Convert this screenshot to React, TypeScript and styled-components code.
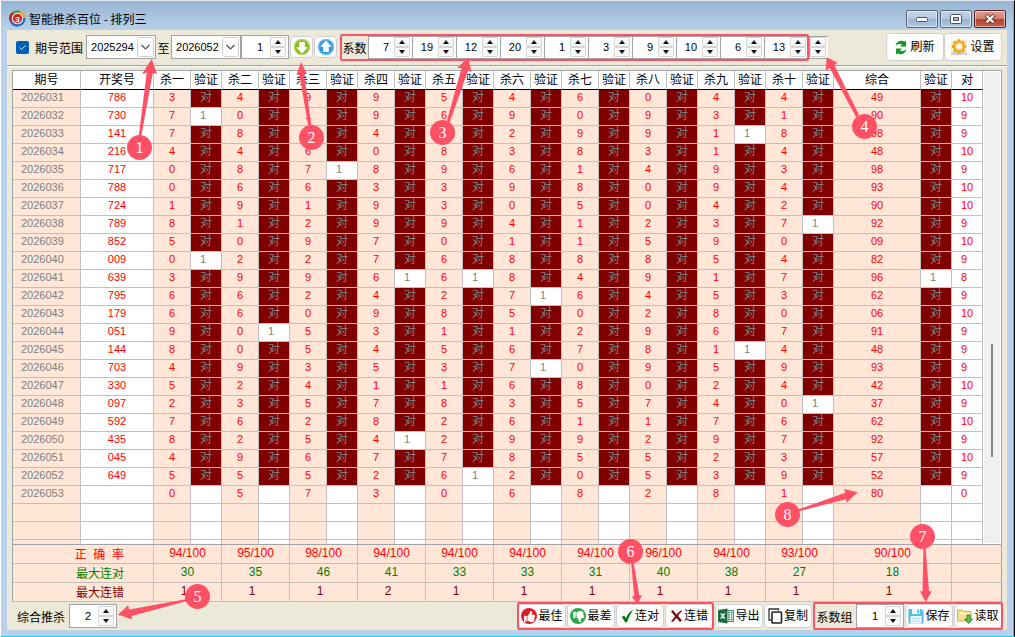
import React from "react";
import styled, { createGlobalStyle, css } from "styled-components";
import { FaThumbsUp, FaThumbsDown } from "react-icons/fa";

const color = {
  face: "#ece9d8",
  frame: "#b9d1ea",
  peach: "#ffe6d7",
  maroon: "#800000",
  line: "#c0c0c0",
  edge: "#a0a4a8",
  red: "#ff0000",
  green: "#008000",
  grey: "#808080",
  mark: "#ff5165",
};

const GlobalStyle = createGlobalStyle`
  * { box-sizing: border-box; }
  body {
    margin: 0;
    background: #fff;
    font-family: "Liberation Sans", "Noto Sans CJK SC", sans-serif;
    font-size: 12px;
    color: #000;
  }
  button, input, select { font: inherit; color: inherit; margin: 0; }
`;

/* ---------- window ---------- */

const Window = styled.div`
  position: relative;
  display: flex;
  flex-direction: column;
  height: 100vh;
  min-width: 1000px;
  padding: 0 7px 6px 6px;
  background: ${color.frame};
  border-top: 1px solid #dfe6ee;
  border-left: 1px solid #fff;
  border-bottom: 1px solid #22cfe6;
  border-right: 1px solid #000;
  box-shadow: inset -1px 0 0 #22cfe6;
  overflow: hidden;
`;

const TitleBar = styled.header`
  display: flex;
  align-items: center;
  height: 29px;
  flex: none;
  margin: 0 -6px;
  padding: 6px 7px 0 8px;
  background: linear-gradient(#98b4d2, #b9d1ea);
`;

const Title = styled.h1`
  margin: 0 auto 0 3px;
  font-size: 12px;
  line-height: 16px;
  font-weight: 400;
  font-family: "Noto Sans CJK SC", sans-serif;
`;

const CaptionButton = styled.button<{ $close?: boolean }>`
  display: flex;
  align-items: center;
  justify-content: center;
  width: 32px;
  height: 18px;
  margin-left: 2px;
  padding: 0;
  border: 1px solid ${(p) => (p.$close ? "#5a1f1f" : "#56677d")};
  border-radius: 2px;
  box-shadow: inset 0 0 0 1px rgba(255, 255, 255, 0.5);
  background: ${(p) =>
    p.$close
      ? "linear-gradient(#e0a094 0%, #d08070 48%, #b8402c 52%, #c8604a 100%)"
      : "linear-gradient(#c3d4e8 0%, #b4c8e0 48%, #98b2d0 52%, #b3c9e2 100%)"};
`;

const Client = styled.main`
  display: flex;
  flex-direction: column;
  flex: 1;
  min-height: 0;
  background: ${color.face};
`;

const Toolbar = styled.div`
  display: flex;
  align-items: center;
  flex: none;
  height: 36px;
  padding: 0 5px 1px 9px;
  border-bottom: 1px solid #a3a193;
  box-shadow: 0 1px 0 #fff;
`;

const BottomBar = styled.div`
  display: flex;
  align-items: center;
  gap: 1px;
  flex: none;
  height: 28px;
  padding: 0 4px 0 10px;
`;

const Spacer = styled.div`
  flex: 1;
`;

/* ---------- controls ---------- */

const CheckLabel = styled.label`
  display: flex;
  align-items: center;
  gap: 6px;
  margin-right: 3px;
  white-space: nowrap;
`;

const Checkbox = styled.input`
  appearance: none;
  width: 13px;
  height: 13px;
  border-radius: 2px;
  background: #005fb8
    url("data:image/svg+xml,%3Csvg xmlns='http://www.w3.org/2000/svg' viewBox='0 0 13 13'%3E%3Cpath d='M3.5 6.5l2 2 4-4' fill='none' stroke='%23cfe3f5'/%3E%3C/svg%3E");
`;

const SelectBox = styled.span`
  position: relative;
  display: flex;
  width: 70px;
  height: 24px;
  svg {
    position: absolute;
    right: 2px;
    top: 2px;
    pointer-events: none;
  }
`;

const Select = styled.select`
  appearance: none;
  width: 100%;
  padding: 0 18px 0 4px;
  border: 1px solid ${color.edge};
  border-radius: 0;
  background: #fff;
  font-size: 11px;
`;

const To = styled.span`
  width: 15px;
  text-align: center;
`;

const SpinBox = styled.span<{ $w: number; $flat?: boolean }>`
  display: flex;
  align-items: center;
  gap: ${(p) => (p.$flat ? 5 : 7)}px;
  width: ${(p) => p.$w}px;
  height: ${(p) => (p.$flat ? 23 : 24)}px;
  padding-right: 2px;
  background: #fff;
  border: 1px solid ${color.edge};
  ${(p) =>
    p.$flat &&
    css`
      border-right: 0;
    `}
`;

const SpinInput = styled.input`
  flex: 1;
  width: 0;
  min-width: 0;
  height: 18px;
  padding: 0;
  border: 0;
  background: none;
  text-align: right;
  font-size: 11px;
  appearance: textfield;
  outline: none;
  &::-webkit-inner-spin-button,
  &::-webkit-outer-spin-button {
    appearance: none;
    margin: 0;
  }
`;

const Arrows = styled.span`
  display: flex;
  flex-direction: column;
  flex: none;
  width: 16px;
`;

const ArrowButton = styled.button`
  display: flex;
  align-items: center;
  justify-content: center;
  height: 10px;
  padding: 0;
  background: #fbfbfb;
  border: 1px solid #d4d4d4;
  border-radius: 1px;
`;

const PushButton = styled.button<{ $big?: boolean }>`
  display: flex;
  align-items: center;
  justify-content: center;
  gap: ${(p) => (p.$big ? 3 : 1)}px;
  flex: none;
  width: ${(p) => (p.$big ? 58 : 48)}px;
  height: ${(p) => (p.$big ? 28 : 24)}px;
  padding: 0;
  border: 1px solid #d0d0ce;
  border-radius: 4px;
  background: #fdfdfd;
  line-height: 16px;
  white-space: nowrap;
`;

const IconButton = styled.button`
  display: flex;
  align-items: center;
  justify-content: center;
  width: 23px;
  height: 22px;
  margin-left: 1px;
  padding: 0;
  border: 1px solid #d0d0ce;
  border-radius: 4px;
  background: #fdfdfd;
`;

const Group = styled.div<{ $tall?: boolean }>`
  position: relative;
  display: flex;
  align-items: center;
  gap: ${(p) => (p.$tall ? 0 : 1)}px;
  height: ${(p) => (p.$tall ? 27 : 28)}px;
  padding: 0 1px;
  margin-left: ${(p) => (p.$tall ? 3 : 0)}px;
  &::after {
    content: "";
    position: absolute;
    inset: 0;
    border: 2px solid ${color.mark};
    border-radius: 2px;
    pointer-events: none;
  }
`;

const GroupLabel = styled.span<{ $w: number }>`
  width: ${(p) => p.$w}px;
  text-align: center;
  white-space: nowrap;
`;

const FieldLabel = styled.label`
  margin-right: 3px;
  white-space: nowrap;
`;

/* ---------- grid ---------- */

const GridArea = styled.section`
  display: flex;
  flex: 1;
  min-height: 0;
  margin: 4px 5px 0;
  border: 1px solid ${color.edge};
  background: #fff;
`;

const GridView = styled.div`
  flex: 1;
  min-width: 0;
  overflow: hidden;
`;

const Table = styled.table`
  width: 100%;
  table-layout: fixed;
  border-collapse: separate;
  border-spacing: 0;
`;

const Th = styled.th`
  height: 19px;
  padding: 0;
  border-right: 1px solid ${color.line};
  border-bottom: 1px solid #000;
  background: #fff;
  font-weight: 400;
  line-height: 18px;
  white-space: nowrap;
`;

type Kind = "period" | "open" | "kill" | "hit" | "miss" | "count";

const Td = styled.td<{ $kind: Kind }>`
  height: 18px;
  padding: 0 0 2px;
  border-right: 1px solid ${color.line};
  border-bottom: 1px solid ${color.line};
  font-size: 11px;
  line-height: 15px;
  text-align: center;
  color: ${color.red};
  background: #fff;
  ${(p) =>
    p.$kind === "period" &&
    css`
      padding-left: 8px;
      text-align: left;
      color: ${color.grey};
      background: ${color.peach};
    `}
  ${(p) =>
    p.$kind === "kill" &&
    css`
      background: ${color.peach};
    `}
  ${(p) =>
    (p.$kind === "hit" || p.$kind === "miss") &&
    css`
      padding-left: 9px;
      text-align: left;
      color: ${color.grey};
    `}
  ${(p) =>
    p.$kind === "hit" &&
    css`
      font-size: 12px;
      background: ${color.maroon};
    `}
  ${(p) =>
    p.$kind === "count" &&
    css`
      padding-left: 9px;
      text-align: left;
    `}
`;

const ScrollTrack = styled.div`
  display: flex;
  justify-content: flex-end;
  flex: none;
  width: 18px;
  padding: 272px 7px 0 0;
  border: 1px solid #fff;
  background: #f0f0f0;
`;

const ScrollThumb = styled.div`
  width: 2px;
  height: 113px;
  background: #858585;
`;

const Summary = styled(Table)`
  flex: none;
  width: auto;
  margin: 0 5px;
  border-left: 1px solid ${color.edge};
  border-right: 1px solid ${color.edge};
  background: ${color.peach};
`;

const SummaryTr = styled.tr<{ $color: string }>`
  color: ${(p) => p.$color};
`;

const SummaryTh = styled.th`
  height: 19px;
  padding: 2px 29px 0 0;
  border-right: 1px solid ${color.line};
  border-bottom: 1px solid ${color.line};
  font-weight: 400;
  line-height: 16px;
  text-align: right;
  white-space: pre;
`;

const SummaryTd = styled.td`
  height: 19px;
  padding: 0 0 2px;
  border-right: 1px solid ${color.line};
  border-bottom: 1px solid ${color.line};
  font-size: 12px;
  line-height: 16px;
  text-align: center;
  white-space: pre;
  &:last-child {
    border-right: 0;
  }
`;

/* ---------- callouts ---------- */

const ArrowLayer = styled.svg`
  position: absolute;
  left: -1px;
  top: -1px;
  pointer-events: none;
`;

const Callout = styled.span<{ $x: number; $y: number }>`
  position: absolute;
  left: ${(p) => p.$x - 14}px;
  top: ${(p) => p.$y - 14}px;
  width: 25px;
  height: 25px;
  border-radius: 50%;
  background: ${color.mark};
  color: #fff;
  font-family: "Liberation Serif", serif;
  font-size: 16px;
  line-height: 25px;
  text-align: center;
  pointer-events: none;
`;

/* ---------- data ---------- */

const digitNames = ["一", "二", "三", "四", "五", "六", "七", "八", "九", "十"];

// period, drawn number, ten kill digits, combined pair, missed columns (11 = combined), correct count
type Draw = [string, string, string, string, number[], string];

const draws: Draw[] = [
  ["2026031", "786", "3499546044", "49", [], "10"],
  ["2026032", "730", "7019690931", "90", [1], "9"],
  ["2026033", "141", "7884829918", "98", [9], "9"],
  ["2026034", "216", "4460838314", "48", [], "10"],
  ["2026035", "717", "0878961493", "98", [3], "9"],
  ["2026036", "788", "0663398094", "93", [], "10"],
  ["2026037", "724", "1919305042", "90", [], "10"],
  ["2026038", "789", "8129941237", "92", [10], "9"],
  ["2026039", "852", "5097011590", "09", [], "10"],
  ["2026040", "009", "0227688854", "82", [1], "9"],
  ["2026041", "639", "3996684917", "96", [4, 5, 11], "8"],
  ["2026042", "795", "6624276453", "62", [6], "9"],
  ["2026043", "179", "6609850280", "06", [], "10"],
  ["2026044", "051", "9053112967", "91", [2], "9"],
  ["2026045", "144", "8054567814", "48", [9], "9"],
  ["2026046", "703", "4935370959", "93", [6], "9"],
  ["2026047", "330", "5241168024", "42", [], "10"],
  ["2026048", "097", "2357835740", "37", [10], "9"],
  ["2026049", "592", "7628261176", "62", [], "10"],
  ["2026050", "435", "8254299297", "92", [4], "9"],
  ["2026051", "045", "4967785523", "57", [], "10"],
  ["2026052", "649", "5552620539", "52", [5], "9"],
  ["2026053", "", "0573068281", "80", [], "0"],
  ["", "", "", "", [], ""],
  ["", "", "", "", [], ""],
  ["", "", "", "", [], ""],
];

const summary = [
  {
    label: "正  确  率",
    tone: color.red,
    values: [94, 95, 98, 94, 94, 94, 94, 96, 94, 93, 90].map((n) => `${n}/100`),
  },
  {
    label: "最大连对",
    tone: color.green,
    values: ["30", "35", "46", "41", "33", "33", "31", "40", "38", "27", "18"],
  },
  {
    label: "最大连错",
    tone: color.maroon,
    values: ["1", "1", "1", "2", "1", "1", "1", "1", "1", "1", "1"].map((n) => n + "  "),
  },
];

const coefficients = [7, 19, 12, 20, 1, 3, 9, 10, 6, 13];

const callouts = [
  { n: 1, x: 140, y: 148, d: "M151.7 59L142 74l4.7-1.3L138.5 138h2.5L152.7 73l4.3 1z" },
  { n: 2, x: 312, y: 138, d: "M301 62l-4.7 13.3 3-1.3L309 130h3L304 73.3l3 .7z" },
  { n: 3, x: 443, y: 133, d: "M468.3 57.3L457 68h4.5L446 124h3L468 70.7l3.3 1.3z" },
  { n: 4, x: 865, y: 127, d: "M826.7 57.3l-1 13.4 4-2.7L856 117l3-2L834.3 65l3.4-2.3z" },
  { n: 5, x: 198, y: 597, d: "M118 614.7l10-9.4 1.5 4.2L187 599v2L131.7 616l.3 3.3z" },
  { n: 6, x: 631, y: 552, d: "M637.7 604l-6-7.3 2.5-.7L631 562h2.5L639.3 595.5l2.7-.2z" },
  { n: 7, x: 923, y: 537, d: "M925.7 602L920 591.3h2.5L923.5 547h2L929 591.3h2.7z" },
  { n: 8, x: 788, y: 515, d: "M857.7 492.3L844 489l1.3 3.7L798 509.5v2L846 499.3l.7 3.4z" },
];

/* ---------- icons ---------- */

const Logo = () => (
  <svg width="17" height="17" viewBox="0 0 17 17">
    <g fill="none" strokeWidth="2.4">
      <path d="M2 11A7 7 0 0 1 4.500 2.700" stroke="#b01c2c" />
      <path d="M4 3.200A7 7 0 0 1 11 1.900" stroke="#3f9a3c" />
      <path d="M11 2A7 7 0 0 1 15.400 8" stroke="#e8a21a" />
      <path d="M15.400 8A7 7 0 0 1 9 15.400" stroke="#2a72c8" />
      <path d="M9 15.400A7 7 0 0 1 2 11" stroke="#3c5fb0" />
    </g>
    <circle cx="8.5" cy="8.5" r="5.5" fill="#fff" />
    <circle cx="8.5" cy="8.5" r="4.7" fill="#d8232b" />
    <text x="8.5" y="11.5" textAnchor="middle" fontSize="8" fontWeight="700" fill="#fff">
      3
    </text>
  </svg>
);

const Chevron = () => (
  <svg width="17" height="20" viewBox="0 0 17 20">
    <rect x=".5" y=".5" width="16" height="19" rx="2" fill="#fdfdfd" stroke="#d0d0d0" />
    <path d="M4.500 8l4 4 4-4" fill="none" stroke="#555" strokeWidth="1.2" />
  </svg>
);

const RoundArrow = ({ up }: { up?: boolean }) => (
  <svg width="18" height="18" viewBox="0 0 18 18">
    <circle cx="9" cy="9" r="8" fill={up ? "#2b9be0" : "#8cbf1f"} />
    <circle cx="9" cy="9" r="7.4" fill="none" stroke={up ? "#7cc8f2" : "#b9da5c"} />
    <path
      d={up ? "M9 2.500l5.800 6.200h-3V14H6.200V8.700h-3z" : "M9 15.500L3.200 9.300h3V4h5.600v5.300h3z"}
      fill="#fff"
    />
  </svg>
);

const RefreshIcon = () => (
  <svg width="12" height="15" viewBox="0 0 12 15">
    <g fill="#0c9a22">
      <path d="M.5 5.500C1.500 2.200 4 .7 6.500.8c1.200 0 2.200.4 3 1L11 .5v6H5l2-2C5.800 3.600 3.500 3.700.5 5.500z" />
      <path d="M11.500 9.500c-1 3.300-3.500 4.800-6 4.700-1.200 0-2.200-.4-3-1L1 14.500v-6h6l-2 2c1.200.9 3.500.8 6.500-1z" />
    </g>
  </svg>
);

const GearIcon = () => (
  <svg width="16" height="16" viewBox="0 0 16 16">
    <rect y="1" width="16" height="15" fill="#f1f1f1" />
    <rect y="13" width="16" height="3" fill="#d2d2d2" />
    <g fill="#f8a413">
      {[0, 45, 90, 135].map((a) => (
        <rect key={a} x="6.3" y=".3" width="3.4" height="14.4" rx=".6" transform={`rotate(${a} 8 7.5)`} />
      ))}
      <circle cx="8" cy="7.5" r="5.6" />
    </g>
    <circle cx="8" cy="7.5" r="4" fill="#ffc94a" />
    <circle cx="8" cy="7.5" r="3.1" fill="#f4f4f4" />
  </svg>
);

const ThumbDisc = styled.span<{ $tone: string }>`
  display: flex;
  align-items: center;
  justify-content: center;
  flex: none;
  width: 16px;
  height: 16px;
  border-radius: 50%;
  background: ${(p) => p.$tone};
  color: #fff;
`;

const CheckIcon = () => (
  <svg width="13" height="14" viewBox="0 0 13 14">
    <path d="M.8 8l2.200-1.500 2 2.700C6.500 5.200 8.500 2.700 12.200.8 9.800 4.500 7.700 8.500 6 13.200H4.200z" fill="#087a14" />
  </svg>
);

const CrossIcon = () => (
  <svg width="13" height="14" viewBox="0 0 13 14">
    <path
      d="M1 2.500L3 1c1.200 1.800 2.300 3.200 3.600 4.500C7.800 4 9.200 2.600 11.500 1.300l.5.700C10.500 3.500 9.200 5 8.200 7c1.200 1.600 2.400 2.900 3.800 4.200L10 13C8.700 11.800 7.500 10.300 6.500 9 5.300 10.500 4.300 11.700 3 13l-2-.8C2.500 10.800 3.800 9.200 5 7.200 3.500 5.500 2.200 4 1 2.500z"
      fill="#7d0d0d"
    />
  </svg>
);

const ExcelIcon = () => (
  <svg width="16" height="16" viewBox="0 0 16 16">
    <rect x="8" y="2.5" width="7.5" height="11" fill="#fff" stroke="#207245" strokeWidth=".8" />
    <path
      d="M10 4.500h1.700M12.700 4.500h1.700M10 6.800h1.700M12.700 6.800h1.700M10 9.200h1.700M12.700 9.200h1.700M10 11.500h1.700M12.700 11.500h1.700"
      stroke="#207245"
      strokeWidth="1.3"
    />
    <path d="M0 2L9.500.5v15L0 14z" fill="#1f6e43" />
    <path d="M2.800 5.300l3.800 5.400M6.600 5.300l-3.800 5.400" stroke="#fff" strokeWidth="1.4" />
  </svg>
);

const CopyIcon = () => (
  <svg width="15" height="16" viewBox="0 0 15 16">
    <path d="M3 12H1V1h9.500v1.500" fill="none" stroke="#333" strokeWidth="1.3" />
    <rect x="4" y="4" width="9.500" height="11" rx=".8" fill="#fff" stroke="#222" strokeWidth="1.6" />
  </svg>
);

const SaveIcon = () => (
  <svg width="16" height="16" viewBox="0 0 16 16">
    <path d="M.5 1h13l2 2v12.500H.5z" fill="#56bdec" />
    <rect x="4" y="1" width="8" height="5" fill="#e9f6fd" />
    <rect x="9" y="1.8" width="2" height="3.2" fill="#56bdec" />
    <rect x="2.5" y="8" width="11" height="7.5" fill="#f2fafe" />
    <path d="M4 10.500h8M4 13h8" stroke="#a9d8f2" />
  </svg>
);

const FolderIcon = () => (
  <svg width="16" height="16" viewBox="0 0 16 16">
    <path d="M.5 2h5l1.500 1.500h7V13H.5z" fill="#f7df8e" stroke="#caa23a" strokeWidth=".8" />
    <path d="M2.500 5.500H13" stroke="#fffbe6" strokeWidth="1.4" />
    <path d="M10 7h3.200v4h2.300l-3.900 4.500L7.700 11H10z" fill="#5cc04f" stroke="#1f7d24" strokeWidth=".8" />
  </svg>
);

/* ---------- composed parts ---------- */

const SpinArrows = ({ name }: { name: string }) => (
  <Arrows>
    <ArrowButton type="button" aria-label={`${name} +`}>
      <svg width="6" height="4" viewBox="0 0 6 4">
        <path d="M0 4l3-4 3 4z" fill="#111" />
      </svg>
    </ArrowButton>
    <ArrowButton type="button" aria-label={`${name} -`}>
      <svg width="6" height="4" viewBox="0 0 6 4">
        <path d="M0 0l3 4 3-4z" fill="#111" />
      </svg>
    </ArrowButton>
  </Arrows>
);

const Spinner = ({
  name,
  value,
  width,
  flat,
  id,
}: {
  name: string;
  value: number;
  width: number;
  flat?: boolean;
  id?: string;
}) => (
  <SpinBox $w={width} $flat={flat}>
    <SpinInput id={id} type="number" aria-label={name} defaultValue={value} />
    <SpinArrows name={name} />
  </SpinBox>
);

const PeriodSelect = ({ name, value }: { name: string; value: string }) => (
  <SelectBox>
    <Select aria-label={name} defaultValue={value}>
      <option>{value}</option>
    </Select>
    <Chevron />
  </SelectBox>
);

const VerifyCell = ({ draw, column }: { draw: Draw; column: number }) => {
  if (!draw[1]) return <Td $kind="miss" />;
  return draw[4].includes(column) ? <Td $kind="miss">1</Td> : <Td $kind="hit">对</Td>;
};

const DrawRow = ({ draw }: { draw: Draw }) => (
  <tr>
    <Td $kind="period">{draw[0]}</Td>
    <Td $kind="open">{draw[1]}</Td>
    {digitNames.map((name, i) => (
      <React.Fragment key={name}>
        <Td $kind="kill">{draw[2][i]}</Td>
        <VerifyCell draw={draw} column={i + 1} />
      </React.Fragment>
    ))}
    <Td $kind="kill">{draw[3]}</Td>
    <VerifyCell draw={draw} column={11} />
    <Td $kind="count">{draw[5]}</Td>
  </tr>
);

const Col = styled.col<{ $w: number }>`
  width: ${(p) => p.$w}px;
`;

export default function App() {
  return (
    <>
      <GlobalStyle />
      <Window>
        <TitleBar>
          <Logo />
          <Title>智能推杀百位 - 排列三</Title>
          <CaptionButton aria-label="最小化">
            <svg width="12" height="7" viewBox="0 0 12 7">
              <rect x=".5" y="2.5" width="11" height="4" rx="1" fill="#fff" stroke="#4a5666" />
            </svg>
          </CaptionButton>
          <CaptionButton aria-label="最大化">
            <svg width="12" height="10" viewBox="0 0 12 10">
              <rect x=".5" y=".5" width="11" height="9" rx="1" fill="#fff" stroke="#4a5666" />
              <rect x="3.500" y="3.500" width="5" height="3" fill="#a9bfdb" stroke="#4a5666" />
            </svg>
          </CaptionButton>
          <CaptionButton $close aria-label="关闭">
            <svg width="12" height="10" viewBox="0 0 12 10">
              <path d="M2 1l8 8M10 1L2 9" stroke="#5b3535" strokeWidth="4" />
              <path d="M2.500 1.500l7 7M9.500 1.500l-7 7" stroke="#fff" strokeWidth="2.4" />
            </svg>
          </CaptionButton>
        </TitleBar>

        <Client>
          <Toolbar>
            <CheckLabel>
              <Checkbox type="checkbox" defaultChecked />
              期号范围
            </CheckLabel>
            <PeriodSelect name="起始期号" value="2025294" />
            <To>至</To>
            <PeriodSelect name="结束期号" value="2026052" />
            <Spinner name="期数" value={1} width={48} />
            <IconButton aria-label="下移">
              <RoundArrow />
            </IconButton>
            <IconButton aria-label="上移">
              <RoundArrow up />
            </IconButton>
            <Group $tall>
              <GroupLabel $w={27}>系数</GroupLabel>
              {coefficients.map((value, i) => (
                <Spinner key={i} name={`系数${i + 1}`} value={value} width={44} flat />
              ))}
            </Group>
            <SpinBox $w={19} $flat>
              <SpinArrows name="全部系数" />
            </SpinBox>
            <Spacer />
            <PushButton $big>
              <RefreshIcon />
              刷新
            </PushButton>
            <PushButton $big>
              <GearIcon />
              设置
            </PushButton>
          </Toolbar>

          <GridArea>
            <GridView>
              <Table>
                <colgroup>
                  <Col $w={68} />
                  <Col $w={73} />
                  {digitNames.map((name) => (
                    <React.Fragment key={name}>
                      <Col $w={37} />
                      <Col $w={31} />
                    </React.Fragment>
                  ))}
                  <Col $w={87} />
                  <Col $w={31} />
                  <Col $w={31} />
                </colgroup>
                <thead>
                  <tr>
                    <Th>期号</Th>
                    <Th>开奖号</Th>
                    {digitNames.map((name) => (
                      <React.Fragment key={name}>
                        <Th>杀{name}</Th>
                        <Th>验证</Th>
                      </React.Fragment>
                    ))}
                    <Th>综合</Th>
                    <Th>验证</Th>
                    <Th>对</Th>
                  </tr>
                </thead>
                <tbody>
                  {draws.map((draw, i) => (
                    <DrawRow key={i} draw={draw} />
                  ))}
                </tbody>
              </Table>
            </GridView>
            <ScrollTrack>
              <ScrollThumb />
            </ScrollTrack>
          </GridArea>

          <Summary>
            <colgroup>
              <Col $w={141} />
              {digitNames.map((name) => (
                <Col key={name} $w={68} />
              ))}
              <Col $w={118} />
              <Col $w={49} />
            </colgroup>
            <tbody>
              {summary.map((row) => (
                <SummaryTr key={row.label} $color={row.tone}>
                  <SummaryTh scope="row">{row.label}</SummaryTh>
                  {row.values.map((value, i) => (
                    <SummaryTd key={i}>{value}</SummaryTd>
                  ))}
                  <SummaryTd />
                </SummaryTr>
              ))}
            </tbody>
          </Summary>

          <BottomBar>
            <FieldLabel htmlFor="combine">综合推杀</FieldLabel>
            <Spinner id="combine" name="综合推杀" value={2} width={48} />
            <Spacer />
            <Group>
              <PushButton>
                <ThumbDisc $tone="#d9202a">
                  <FaThumbsUp size={11} />
                </ThumbDisc>
                最佳
              </PushButton>
              <PushButton>
                <ThumbDisc $tone="#2fa84a">
                  <FaThumbsDown size={11} />
                </ThumbDisc>
                最差
              </PushButton>
              <PushButton>
                <CheckIcon />
                连对
              </PushButton>
              <PushButton>
                <CrossIcon />
                连错
              </PushButton>
            </Group>
            <PushButton>
              <ExcelIcon />
              导出
            </PushButton>
            <PushButton>
              <CopyIcon />
              复制
            </PushButton>
            <Group>
              <GroupLabel $w={41}>系数组</GroupLabel>
              <Spinner name="系数组" value={1} width={48} />
              <PushButton>
                <SaveIcon />
                保存
              </PushButton>
              <PushButton>
                <FolderIcon />
                读取
              </PushButton>
            </Group>
          </BottomBar>
        </Client>

        <ArrowLayer width="1015" height="637" viewBox="0 0 1015 637" fill={color.mark}>
          {callouts.map((c) => (
            <path key={c.n} d={c.d} />
          ))}
        </ArrowLayer>
        {callouts.map((c) => (
          <Callout key={c.n} $x={c.x} $y={c.y}>
            {c.n}
          </Callout>
        ))}
      </Window>
    </>
  );
}
